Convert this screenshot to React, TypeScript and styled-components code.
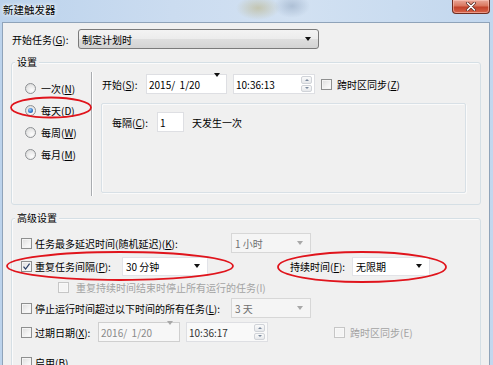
import React from 'react';
import styled, { createGlobalStyle } from 'styled-components';

const GlobalStyle = createGlobalStyle`
  html, body {
    margin: 0;
    padding: 0;
  }
  body {
    font-family: "Noto Sans CJK SC", "Noto Sans", sans-serif;
    font-size: 10px;
    color: #000;
  }
`;

const Screen = styled.div`
  position: relative;
  width: 493px;
  height: 365px;
  overflow: hidden;
  background:
    radial-gradient(ellipse 22px 12px at 258px 8px, rgba(190, 186, 150, 0.7), rgba(190, 186, 150, 0)),
    radial-gradient(ellipse 18px 12px at 292px 6px, rgba(150, 170, 195, 0.6), rgba(150, 170, 195, 0)),
    linear-gradient(90deg, #bcd3ec 0%, #cbdcf0 35%, #d2e1f2 60%, #c2d7ee 100%);
`;

const TitleBar = styled.div`
  display: flex;
  align-items: flex-start;
  height: 22px;
`;

const Title = styled.div`
  padding: 2px 0 0 3px;
  line-height: 16px;
  font-size: 10.5px;
  text-shadow: 0 0 5px #fff, 0 0 3px #fff;
`;

const CloseButton = styled.div`
  display: flex;
  align-items: center;
  justify-content: center;
  margin-left: auto;
  margin-right: 3px;
  width: 38px;
  height: 14px;
  box-sizing: border-box;
  border: 1px solid #6e2e22;
  border-top: none;
  border-radius: 0 0 4px 4px;
  background: linear-gradient(#e9a899 0%, #d9775f 45%, #c2432b 55%, #d8644a 100%);
  box-shadow: inset 0 0 0 1px rgba(255, 210, 200, 0.5);
`;

const Client = styled.div`
  margin: 0 3px 0 2px;
  height: 343px;
  box-sizing: border-box;
  padding: 6px 0 0 8px;
  background: #f0f0f0;
  border: 1px solid #8fa3b9;
  border-bottom: none;
`;

const Row = styled.div<{ $mt?: number; $pl?: number }>`
  display: flex;
  align-items: center;
  height: 20px;
  margin-top: ${p => p.$mt ?? 0}px;
  padding-left: ${p => p.$pl ?? 0}px;
  white-space: nowrap;
`;

const Label = styled.span<{ $w?: number; $disabled?: boolean; $ml?: number }>`
  display: inline-block;
  width: ${p => (p.$w ? `${p.$w}px` : 'auto')};
  margin-left: ${p => p.$ml ?? 0}px;
  color: ${p => (p.$disabled ? '#a3a3a3' : '#000')};
  flex-shrink: 0;
`;

const Acc = styled.span`
  text-decoration: underline;
  text-underline-offset: 1px;
`;

const Combo = styled.div<{ $w: number; $variant: 'button' | 'edit' | 'disabled'; $h?: number }>`
  display: flex;
  align-items: center;
  width: ${p => p.$w}px;
  height: ${p => p.$h ?? 20}px;
  box-sizing: border-box;
  padding: 0 7px 0 3px;
  flex-shrink: 0;
  border-radius: ${p => (p.$variant === 'button' ? '3px' : '0')};
  border: 1px solid
    ${p => (p.$variant === 'button' ? '#7a7a7a' : p.$variant === 'edit' ? '#e2e3e8' : '#d7d7d7')};
  background: ${p =>
    p.$variant === 'button'
      ? 'linear-gradient(#f3f3f3 0%, #ececec 50%, #dedede 52%, #d3d3d3 100%)'
      : p.$variant === 'edit'
      ? '#fff'
      : '#f5f5f5'};
  color: ${p => (p.$variant === 'disabled' ? '#6f6f6f' : '#000')};
`;

const ComboText = styled.span`
  flex: 1;
`;

const Arrow = styled.span<{ $disabled?: boolean }>`
  width: 0;
  height: 0;
  border-left: 3.5px solid transparent;
  border-right: 3.5px solid transparent;
  border-top: 4px solid ${p => (p.$disabled ? '#a8a8a8' : '#111')};
`;

const Field = styled.div<{ $w: number; $disabled?: boolean; $ml?: number }>`
  display: flex;
  align-items: center;
  width: ${p => p.$w}px;
  height: 20px;
  margin-left: ${p => p.$ml ?? 0}px;
  box-sizing: border-box;
  padding: 0 2px 0 2px;
  flex-shrink: 0;
  background: ${p => (p.$disabled ? '#f7f7f7' : '#fff')};
  border: 1px solid ${p => (p.$disabled ? '#cfcfcf' : '#dedfe3')};
  color: ${p => (p.$disabled ? '#8a8a8a' : '#000')};
`;

const DateArrow = styled.span`
  margin: 0 4px 0 auto;
`;

const Spinner = styled.div`
  display: flex;
  flex-direction: column;
  gap: 1px;
  margin-left: auto;
  width: 11px;
  height: 16px;
`;

const SpinHalf = styled.div<{ $down?: boolean }>`
  flex: 1;
  display: flex;
  align-items: center;
  justify-content: center;
  border: 1px solid #d0d3d8;
  border-radius: 2px;
  background: linear-gradient(#fafafa, #e6e8eb);
  &::after {
    content: '';
    border-left: 2.5px solid transparent;
    border-right: 2.5px solid transparent;
    ${p => (p.$down ? 'border-top: 2.5px solid #7b8a9e;' : 'border-bottom: 2.5px solid #7b8a9e;')}
  }
`;

const Box = styled.span<{ $disabled?: boolean }>`
  display: flex;
  align-items: center;
  justify-content: center;
  width: 11px;
  height: 11px;
  box-sizing: border-box;
  flex-shrink: 0;
  border: 1px solid ${p => (p.$disabled ? '#c6c6c6' : '#8e8f8f')};
  background: ${p =>
    p.$disabled ? '#f4f4f4' : 'linear-gradient(135deg, #dcdcdc 0%, #f3f3f3 60%, #fdfdfd 100%)'};
  box-shadow: inset 0 0 0 1px ${p => (p.$disabled ? '#f8f8f8' : '#f4f4f4')};
`;

const CheckRow = styled.div<{ $gap?: number }>`
  display: flex;
  align-items: center;
  gap: ${p => p.$gap ?? 3}px;
`;

const Radio = styled.span<{ $checked?: boolean }>`
  display: flex;
  align-items: center;
  justify-content: center;
  width: 11px;
  height: 11px;
  box-sizing: border-box;
  border-radius: 50%;
  border: 1px solid #8e9194;
  background: radial-gradient(circle at 65% 70%, #fdfdfd 0%, #e8e8e8 55%, #cfcfcf 100%);
  &::after {
    content: '';
    display: ${p => (p.$checked ? 'block' : 'none')};
    width: 5px;
    height: 5px;
    border-radius: 50%;
    background: radial-gradient(circle at 40% 35%, #9fd0fb 0%, #3a7fd0 50%, #1b4f99 100%);
  }
`;

const RadioItem = styled.div`
  display: flex;
  align-items: center;
  gap: 5px;
  height: 22px;
`;

const Group = styled.div<{ $mt: number; $h: number }>`
  width: 470px;
  height: ${p => p.$h}px;
  margin-top: ${p => p.$mt}px;
  box-sizing: border-box;
  border: 1px solid #d5dfe5;
  border-radius: 3px;
  box-shadow: inset 1px 1px 0 #fbfbfb;
`;

const Legend = styled.div`
  width: fit-content;
  margin: -8px 0 0 3px;
  padding: 0 2px;
  line-height: 14px;
  background: #f0f0f0;
`;

const SettingsBody = styled.div`
  display: flex;
  margin-top: 3px;
  height: 124px;
`;

const RadioColumn = styled.div`
  width: 79px;
  box-sizing: border-box;
  padding: 5px 0 0 13px;
`;

const Separator = styled.div`
  width: 0;
  border-left: 1px solid #a9acb0;
  border-right: 1px solid #fff;
`;

const RightPane = styled.div`
  flex: 1;
  padding: 2px 0 0 9px;
`;

const InnerBox = styled.div`
  width: 365px;
  height: 90px;
  margin: 9px 0 0 -1px;
  box-sizing: border-box;
  padding: 8px 0 0 10px;
  border: 1px solid #d8e0e6;
  border-radius: 2px;
  box-shadow: inset 1px 1px 0 #fafafa, 1px 1px 0 #fafafa;
`;

const AdvancedBody = styled.div`
  padding-left: 9px;
`;

const Overlay = styled.svg`
  position: absolute;
  left: 0;
  top: 0;
  pointer-events: none;
`;

const Check: React.FC<{ checked?: boolean; disabled?: boolean }> = ({ checked, disabled }) => (
  <Box $disabled={disabled}>
    {checked && (
      <svg width="9" height="9" viewBox="0 0 9 9">
        <path d="M1.5 4.6 L3.6 7 L7.6 1.6" fill="none" stroke="#2b3f66" strokeWidth="1.2" />
      </svg>
    )}
  </Box>
);

const TimeField: React.FC<{ w: number; value: string; ml?: number; dim?: boolean }> = ({
  w,
  value,
  ml,
  dim,
}) => (
  <Field $w={w} $ml={ml} style={dim ? { background: '#f9f9f9', color: '#333' } : undefined}>
    <span>{value}</span>
    <Spinner>
      <SpinHalf />
      <SpinHalf $down />
    </Spinner>
  </Field>
);

const App: React.FC = () => {
  return (
    <Screen>
      <GlobalStyle />
      <TitleBar>
        <Title>新建触发器</Title>
        <CloseButton>
          <svg width="12" height="9" viewBox="0 0 12 9">
            <path d="M2.5 1 L9.5 8 M9.5 1 L2.5 8" stroke="#5a2a22" strokeWidth="3" strokeLinecap="round" />
            <path d="M2.5 1 L9.5 8 M9.5 1 L2.5 8" stroke="#fff" strokeWidth="1.6" strokeLinecap="round" />
          </svg>
        </CloseButton>
      </TitleBar>

      <Client>
        <Row $pl={1}>
          <Label $w={66}>
            开始任务(<Acc>G</Acc>):
          </Label>
          <Combo $w={241} $variant="button">
            <ComboText>制定计划时</ComboText>
            <Arrow />
          </Combo>
        </Row>

        <Group $mt={13} $h={143}>
          <Legend>设置</Legend>
          <SettingsBody>
            <RadioColumn>
              <RadioItem>
                <Radio />
                <span>
                  一次(<Acc>N</Acc>)
                </span>
              </RadioItem>
              <RadioItem>
                <Radio $checked />
                <span>
                  每天(<Acc>D</Acc>)
                </span>
              </RadioItem>
              <RadioItem>
                <Radio />
                <span>
                  每周(<Acc>W</Acc>)
                </span>
              </RadioItem>
              <RadioItem>
                <Radio />
                <span>
                  每月(<Acc>M</Acc>)
                </span>
              </RadioItem>
            </RadioColumn>
            <Separator />
            <RightPane>
              <Row>
                <Label $w={44}>
                  开始(<Acc>S</Acc>):
                </Label>
                <Field $w={81}>
                  <span>2015/&nbsp; 1/20</span>
                  <DateArrow>
                    <Arrow />
                  </DateArrow>
                </Field>
                <TimeField w={82} ml={6} value="10:36:13" />
                <CheckRow $gap={5} style={{ marginLeft: 6 }}>
                  <Check />
                  <span>
                    跨时区同步(<Acc>Z</Acc>)
                  </span>
                </CheckRow>
              </Row>
              <InnerBox>
                <Row>
                  <Label $w={45}>
                    每隔(<Acc>C</Acc>):
                  </Label>
                  <Field $w={27}>1</Field>
                  <Label $ml={8}>天发生一次</Label>
                </Row>
              </InnerBox>
            </RightPane>
          </SettingsBody>
        </Group>

        <Group $mt={13} $h={200}>
          <Legend>高级设置</Legend>
          <AdvancedBody>
            <Row $mt={8}>
              <CheckRow>
                <Check />
                <Label $w={196}>
                  任务最多延迟时间(随机延迟)(<Acc>K</Acc>):
                </Label>
              </CheckRow>
              <Combo $w={80} $variant="disabled">
                <ComboText>1 小时</ComboText>
                <Arrow $disabled />
              </Combo>
            </Row>
            <Row $mt={3}>
              <CheckRow>
                <Check checked />
                <Label $w={87}>
                  重复任务间隔(<Acc>P</Acc>):
                </Label>
              </CheckRow>
              <Combo $w={86} $h={19} $variant="edit">
                <ComboText>30 分钟</ComboText>
                <Arrow />
              </Combo>
              <Label $w={62} $ml={82}>
                持续时间(<Acc>F</Acc>):
              </Label>
              <Combo $w={78} $h={19} $variant="edit">
                <ComboText>无限期</ComboText>
                <Arrow />
              </Combo>
            </Row>
            <Row $mt={1} $pl={37}>
              <CheckRow $gap={7}>
                <Check disabled />
                <Label $disabled>重复持续时间结束时停止所有运行的任务(I)</Label>
              </CheckRow>
            </Row>
            <Row $mt={1}>
              <CheckRow>
                <Check />
                <Label $w={196}>
                  停止运行时间超过以下时间的所有任务(<Acc>L</Acc>):
                </Label>
              </CheckRow>
              <Combo $w={80} $variant="disabled">
                <ComboText>3 天</ComboText>
                <Arrow $disabled />
              </Combo>
            </Row>
            <Row $mt={4}>
              <CheckRow>
                <Check />
                <Label $w={63}>
                  过期日期(<Acc>X</Acc>):
                </Label>
              </CheckRow>
              <Field $w={82} $disabled>
                <span>2016/&nbsp; 1/20</span>
                <DateArrow>
                  <Arrow $disabled />
                </DateArrow>
              </Field>
              <TimeField w={82} ml={6} value="10:36:17" dim />
              <CheckRow $gap={5} style={{ marginLeft: 66 }}>
                <Check disabled />
                <Label $disabled>跨时区同步(E)</Label>
              </CheckRow>
            </Row>
            <Row $mt={10}>
              <CheckRow>
                <Check />
                <span>
                  启用(<Acc>B</Acc>)
                </span>
              </CheckRow>
            </Row>
          </AdvancedBody>
        </Group>
      </Client>

      <Overlay width="493" height="365" viewBox="0 0 493 365">
        <g fill="none" stroke="#e0141c" strokeWidth="1.8">
          <ellipse cx="51" cy="107.5" rx="40" ry="10" />
          <ellipse cx="120" cy="266" rx="113" ry="14" />
          <ellipse cx="362" cy="267" rx="84" ry="15" />
        </g>
      </Overlay>
    </Screen>
  );
};

export default App;
